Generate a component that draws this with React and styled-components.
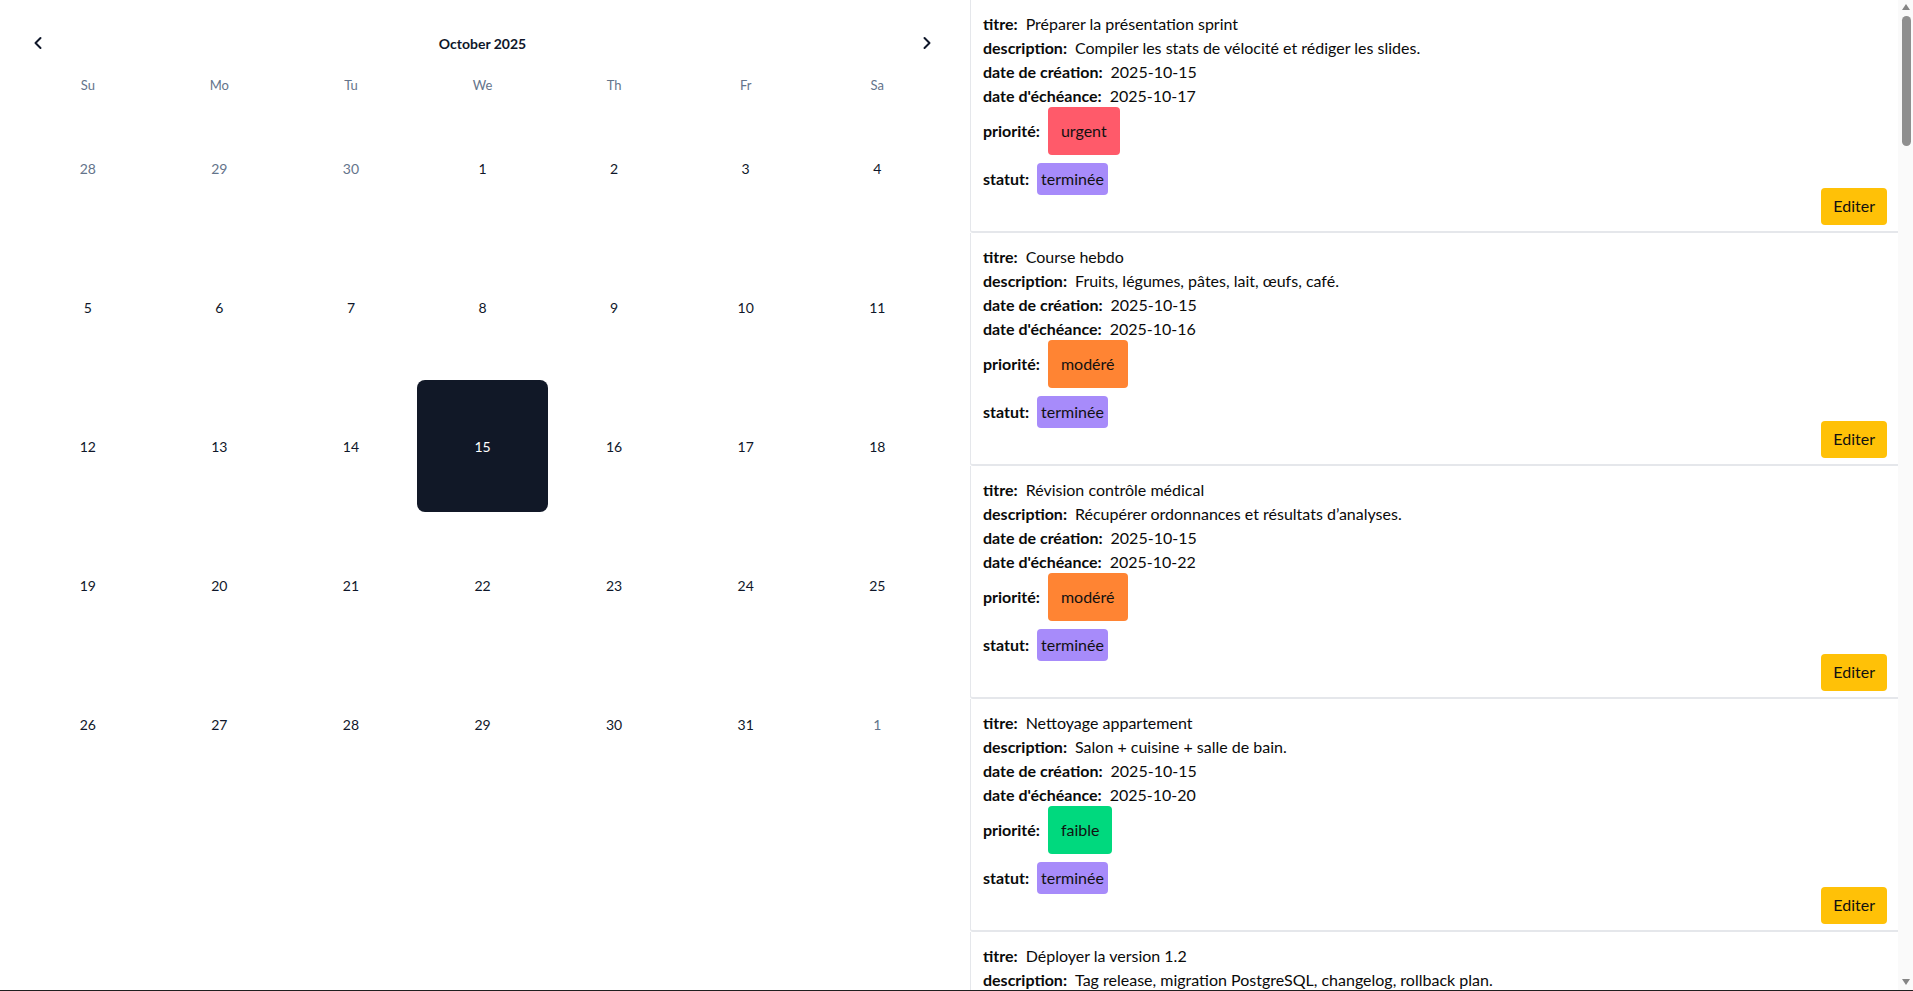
import React from 'react';
import styled, { createGlobalStyle } from 'styled-components';

const GlobalStyle = createGlobalStyle`
  html, body {
    margin: 0;
    padding: 0;
    background: #ffffff;
    font-family: 'Lato', 'Liberation Sans', sans-serif;
    color: #0a0a0a;
  }
`;

const Page = styled.div`
  display: grid;
  grid-template-columns: 970px 1fr;
  height: 100vh;
  box-sizing: border-box;
  border-bottom: 1px solid #1f1f1f;
  overflow: hidden;
`;

const CalendarPanel = styled.section`
  padding: 29px 27px 0 22px;
`;

const CalHeader = styled.div`
  display: flex;
  align-items: center;
  height: 28px;
`;

const NavButton = styled.button`
  display: flex;
  align-items: center;
  justify-content: center;
  width: 28px;
  height: 28px;
  padding: 0;
  border: none;
  background: transparent;
  color: #0f172a;
  cursor: pointer;
  margin: 0 2px;
`;

const MonthTitle = styled.div`
  flex: 1;
  text-align: center;
  font-size: 14px;
  font-weight: 700;
  color: #0f172a;
`;

const Grid = styled.div`
  display: grid;
  grid-template-columns: repeat(7, 1fr);
  row-gap: 7.4px;
  margin-top: 18px;
`;

const WeekDay = styled.div`
  height: 20px;
  display: flex;
  align-items: center;
  justify-content: center;
  font-size: 13px;
  color: #64748b;
`;

const Day = styled.div`
  aspect-ratio: 1 / 1;
  display: flex;
  align-items: center;
  justify-content: center;
  font-size: 14px;
  border-radius: 8px;
  color: ${(p) => (p.$selected ? '#ffffff' : p.$outside ? '#64748b' : '#0f172a')};
  background: ${(p) => (p.$selected ? '#111827' : 'transparent')};
`;

const RightPane = styled.div`
  display: flex;
  min-height: 0;
  overflow: hidden;
`;

const TaskList = styled.section`
  flex: 1;
  min-width: 0;
  overflow-y: auto;
  scrollbar-width: none;
  &::-webkit-scrollbar {
    display: none;
  }
`;

const ScrollGutter = styled.div`
  width: 15px;
  flex: none;
  display: flex;
  flex-direction: column;
  align-items: center;
  background: #fafafa;
`;

const Arrow = styled.div`
  width: 0;
  height: 0;
  margin: ${(p) => (p.$down ? '0 0 5px 1px' : '4px 0 6px 1px')};
  border-left: 4.5px solid transparent;
  border-right: 4.5px solid transparent;
  border-top: ${(p) => (p.$down ? '6px solid #858585' : 'none')};
  border-bottom: ${(p) => (p.$down ? 'none' : '6px solid #858585')};
`;

const Thumb = styled.div`
  width: 9px;
  height: 130px;
  margin-left: 2px;
  border-radius: 5px;
  background: #8f8f8f;
`;

const Spacer = styled.div`
  flex: 1;
`;

const Card = styled.article`
  display: flex;
  justify-content: space-between;
  align-items: flex-end;
  padding: 12px 11px 6px 12px;
  border-left: 1px solid #e5e7eb;
  border-bottom: 2px solid #e5e7eb;
  border-bottom-left-radius: 3px;
`;

const Info = styled.div`
  display: flex;
  flex-direction: column;
  padding-bottom: 30px;
`;

const Line = styled.div`
  display: flex;
  align-items: center;
  font-size: 16px;
  line-height: 24px;
  margin-top: ${(p) => p.$mt || 0}px;
`;

const Label = styled.span`
  font-weight: 700;
  margin-right: 8px;
`;

const Badge = styled.span`
  display: inline-block;
  border-radius: 4px;
  padding: ${(p) => (p.$big ? '12px 13px' : '4px 4px')};
  background: ${(p) => p.$bg};
  color: #111;
`;

const EditButton = styled.button`
  font-family: inherit;
  font-size: 16px;
  line-height: 24px;
  padding: 6px 12px 7px;
  border: none;
  border-radius: 4px;
  background: #ffc107;
  color: #111;
  cursor: pointer;
`;

const ChevronLeft = () => (
  <svg width="20" height="20" viewBox="0 0 24 24" fill="none" stroke="currentColor" strokeWidth="2.4" strokeLinecap="round" strokeLinejoin="round">
    <path d="m15 18-6-6 6-6" />
  </svg>
);

const ChevronRight = () => (
  <svg width="20" height="20" viewBox="0 0 24 24" fill="none" stroke="currentColor" strokeWidth="2.4" strokeLinecap="round" strokeLinejoin="round">
    <path d="m9 18 6-6-6-6" />
  </svg>
);

const weekDays = ['Su', 'Mo', 'Tu', 'We', 'Th', 'Fr', 'Sa'];

const days = [
  ...[28, 29, 30].map((d) => ({ d, outside: true })),
  ...Array.from({ length: 31 }, (_, i) => ({ d: i + 1 })),
  { d: 1, outside: true },
];

const priorityColors = {
  urgent: '#ff5a6a',
  'modéré': '#ff8433',
  faible: '#00d97e',
};

const baseTasks = [
  { titre: 'Préparer la présentation sprint', description: 'Compiler les stats de vélocité et rédiger les slides.', creation: '2025-10-15', echeance: '2025-10-17', priorite: 'urgent' },
  { titre: 'Course hebdo', description: 'Fruits, légumes, pâtes, lait, œufs, café.', creation: '2025-10-15', echeance: '2025-10-16', priorite: 'modéré' },
  { titre: 'Révision contrôle médical', description: 'Récupérer ordonnances et résultats d’analyses.', creation: '2025-10-15', echeance: '2025-10-22', priorite: 'modéré' },
  { titre: 'Nettoyage appartement', description: 'Salon + cuisine + salle de bain.', creation: '2025-10-15', echeance: '2025-10-20', priorite: 'faible' },
  { titre: 'Déployer la version 1.2', description: 'Tag release, migration PostgreSQL, changelog, rollback plan.', creation: '2025-10-15', echeance: '2025-10-24', priorite: 'urgent' },
  { titre: 'Réserver billets de train', description: 'Aller-retour Lyon pour le week-end.', creation: '2025-10-15', echeance: '2025-10-19', priorite: 'modéré' },
  { titre: 'Lire le chapitre 4', description: 'Prendre des notes sur les design patterns.', creation: '2025-10-15', echeance: '2025-10-25', priorite: 'faible' },
];

const tasks = Array.from({ length: 31 }, (_, i) => baseTasks[i % baseTasks.length]);

export default function App() {
  return (
    <>
      <GlobalStyle />
      <Page>
        <CalendarPanel>
          <CalHeader>
            <NavButton><ChevronLeft /></NavButton>
            <MonthTitle>October 2025</MonthTitle>
            <NavButton><ChevronRight /></NavButton>
          </CalHeader>
          <Grid>
            {weekDays.map((w) => (
              <WeekDay key={w}>{w}</WeekDay>
            ))}
            {days.map((day, i) => (
              <Day key={i} $outside={day.outside} $selected={!day.outside && day.d === 15}>
                {day.d}
              </Day>
            ))}
          </Grid>
        </CalendarPanel>

        <RightPane>
          <TaskList>
            {tasks.map((t, i) => (
              <Card key={i}>
                <Info>
                  <Line><Label>titre:</Label>{t.titre}</Line>
                  <Line><Label>description:</Label>{t.description}</Line>
                  <Line><Label>date de création:</Label>{t.creation}</Line>
                  <Line><Label>date d'échéance:</Label>{t.echeance}</Line>
                  <Line $mt={-1}>
                    <Label>priorité:</Label>
                    <Badge $big $bg={priorityColors[t.priorite]}>{t.priorite}</Badge>
                  </Line>
                  <Line $mt={8}>
                    <Label>statut:</Label>
                    <Badge $bg="#a78bfa">terminée</Badge>
                  </Line>
                </Info>
                <EditButton>Editer</EditButton>
              </Card>
            ))}
          </TaskList>
          <ScrollGutter>
            <Arrow />
            <Thumb />
            <Spacer />
            <Arrow $down />
          </ScrollGutter>
        </RightPane>
      </Page>
    </>
  );
}
